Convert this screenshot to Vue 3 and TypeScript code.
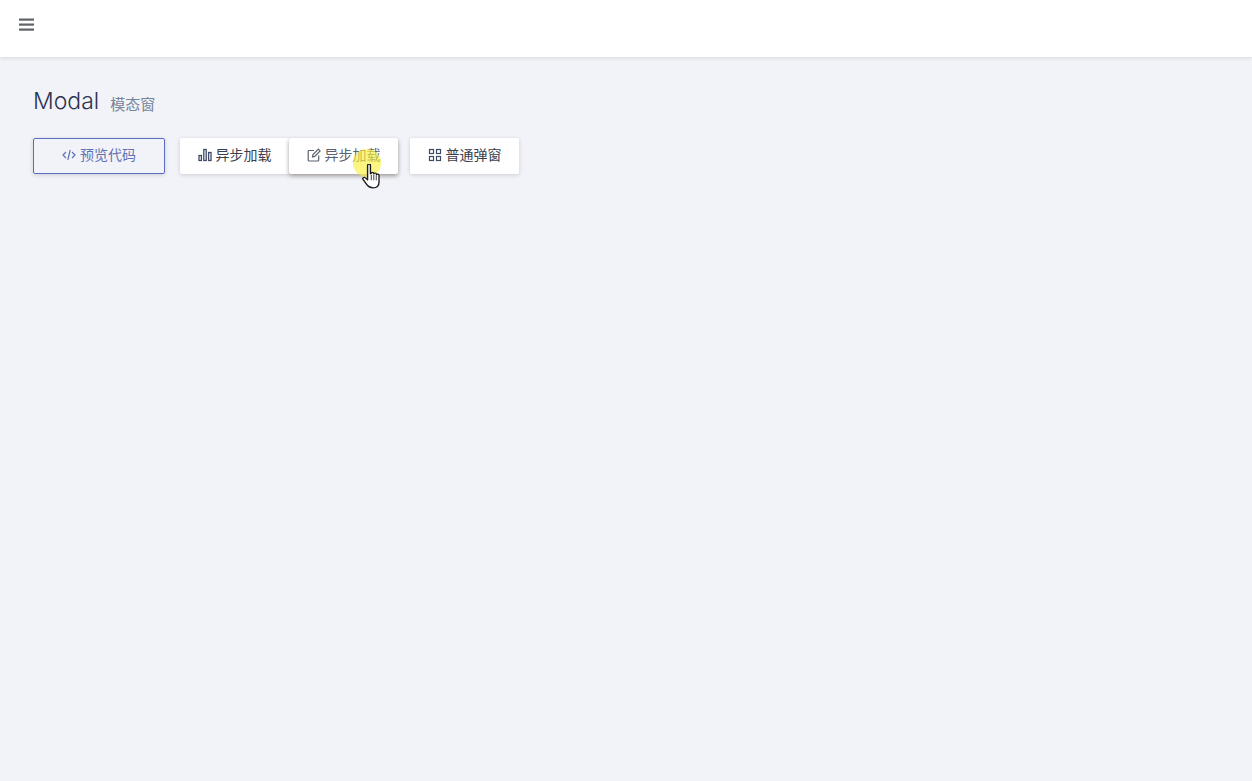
<script setup lang="ts">
interface Btn { label: string; icon: string }
const group: Btn[] = [
  { label: '异步加载', icon: 'bars' },
  { label: '异步加载', icon: 'edit' },
]
</script>

<template>
  <div class="app">
    <header class="topbar">
      <svg class="menu" width="16" height="14" viewBox="0 0 16 14" aria-hidden="true">
        <rect x="1" y="0.5" width="15" height="2.2" fill="#5f6368" />
        <rect x="1" y="5.5" width="15" height="2.2" fill="#5f6368" />
        <rect x="1" y="10.5" width="15" height="2.2" fill="#5f6368" />
      </svg>
    </header>
    <main class="content">
      <div class="title-row">
        <h1 class="title">Modal</h1>
        <span class="subtitle">模态窗</span>
      </div>
      <div class="actions">
        <button class="btn outline">
          <svg class="ic" width="14" height="14" viewBox="0 0 14 14" fill="none" stroke="currentColor" stroke-width="1.2">
            <path d="M4 4 1 7l3 3M10 4l3 3-3 3M8.2 2 5.8 12" />
          </svg>
          <span>预览代码</span>
        </button>
        <div class="group">
          <button v-for="(b, i) in group" :key="i" class="btn" :class="{ hover: i === 1 }">
            <svg v-if="b.icon === 'bars'" class="ic" width="14" height="14" viewBox="0 0 14 14" fill="none" stroke="#3d4a66" stroke-width="1.3">
              <rect x="1" y="7.5" width="2.4" height="5" />
              <rect x="5.8" y="1.5" width="2.4" height="11" />
              <rect x="10.6" y="4.5" width="2.4" height="8" />
            </svg>
            <svg v-else class="ic" width="14" height="14" viewBox="0 0 14 14" fill="none" stroke="#5a6170" stroke-width="1.2">
              <path d="M7 2.5H2a.8.8 0 0 0-.8.8v8.9c0 .5.4.8.8.8h8.9c.4 0 .8-.3.8-.8V7.5" />
              <path d="M5.5 8.9 6 6.6 11.4 1.2l1.7 1.7L7.7 8.4z" />
            </svg>
            <span>{{ b.label }}</span>
          </button>
        </div>
        <button class="btn single">
          <svg class="ic" width="14" height="14" viewBox="0 0 14 14" fill="none" stroke="#3d4a66" stroke-width="1.2">
            <rect x="1.5" y="1.5" width="4" height="4" />
            <rect x="8.5" y="1.5" width="4" height="4" />
            <rect x="1.5" y="8.5" width="4" height="4" />
            <rect x="8.5" y="8.5" width="4" height="4" />
          </svg>
          <span>普通弹窗</span>
        </button>
      </div>
    </main>
    <div class="cursor-halo"></div>
    <svg class="cursor" width="18" height="25" viewBox="0.5 1 14.5 23" preserveAspectRatio="none" aria-hidden="true">
      <path d="M5 2.2c0-1.5 2.3-1.5 2.3 0V10l.6-.2c0-1.4 2-1.4 2.1 0v.4c.2-1.3 2.1-1.2 2.1.1v.7c.3-1.1 2.1-.9 2.1.4v6.2c0 3-1.6 5.4-4.8 5.4-2.6 0-3.8-1.1-5-3L1.3 15.2c-.8-1.3.9-2.5 1.9-1.4L5 15.6z" fill="#fff" stroke="#1c1c1c" stroke-width="1.1" stroke-linejoin="round" />
      <path d="M8 11v5M10 11v5M12 11.5V16" stroke="#1c1c1c" stroke-width="0.7" fill="none" />
    </svg>
  </div>
</template>

<style>
html, body { margin: 0; background: #f1f3f8; }
</style>

<style scoped>
.app {
  position: relative;
  height: 781px;
  overflow: hidden;
  background: #f1f3f8;
  font-family: "Noto Sans CJK SC", "Noto Sans", sans-serif;
}
.topbar {
  height: 57px;
  box-sizing: border-box;
  background: #fff;
  box-shadow: 0 1px 4px rgba(0, 21, 41, 0.12);
  display: flex;
  align-items: center;
  padding: 0 0 7px 18px;
}
.menu { display: block; }
.content { padding: 30px 33px 0; }
.title-row { display: flex; align-items: flex-start; gap: 11px; height: 28px; }
.title {
  margin: 0;
  font-family: Inter, sans-serif;
  font-size: 23px;
  font-weight: 300;
  letter-spacing: 0;
  color: #2c3350;
  line-height: 28px;
}
.subtitle { font-size: 15px; line-height: 22px; margin-top: 6px; color: #78849a; }
.actions { display: flex; align-items: flex-start; margin-top: 23px; }
.btn {
  box-sizing: border-box;
  height: 36px;
  width: 109px;
  display: inline-flex;
  align-items: center;
  justify-content: center;
  gap: 4px;
  border: 0;
  border-radius: 2px;
  background: #fff;
  color: #3a3f4d;
  font: inherit;
  font-size: 14px;
  padding: 0 0 1px;
  box-shadow: 0 1px 4px rgba(0, 0, 0, 0.16);
}
.btn span { display: block; line-height: 20px; margin-top: -3px; }
.btn.outline {
  width: 132px;
  margin-right: 15px;
  background: transparent;
  border: 1px solid #5a6cc0;
  color: #5f72b5;
}
.ic { flex: none; margin-top: -1px; }
.group { display: flex; }
.group .btn { border-radius: 2px 0 0 2px; }
.group .btn.hover {
  position: relative;
  border-radius: 2px;
  color: #5a6170;
  box-shadow: 0 2px 4px rgba(60, 40, 40, 0.45);
}
.single { margin-left: 12px; }
.cursor-halo {
  position: absolute;
  left: 353px;
  top: 149px;
  width: 28px;
  height: 28px;
  border-radius: 50%;
  background: rgba(250, 240, 60, 0.65);
}
.cursor { position: absolute; left: 362px; top: 164px; }
</style>
